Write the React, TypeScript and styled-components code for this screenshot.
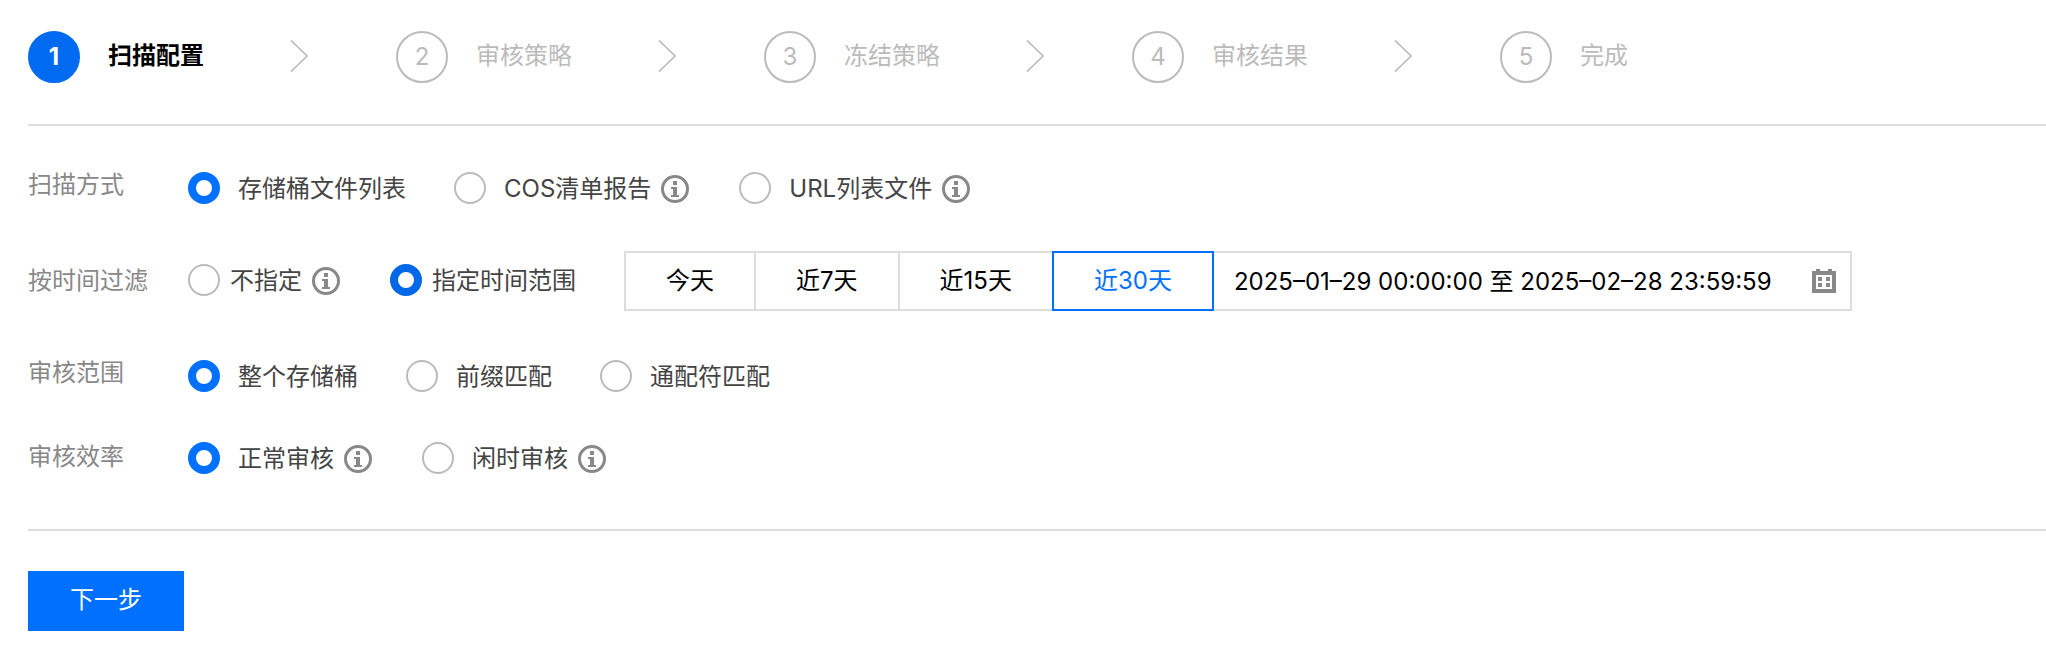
import React, { useState } from "react";
import styled, { createGlobalStyle } from "styled-components";

const GlobalStyle = createGlobalStyle`
  * { box-sizing: border-box; }
  body {
    margin: 0;
    background: #fff;
    color: #444;
    font-family: Inter, "Noto Sans CJK SC", sans-serif;
    font-size: 24px;
    line-height: 36px;
  }
  button, input { font: inherit; }
`;

const Page = styled.main`
  padding: 31px 0 17px 28px;
`;

const Steps = styled.ol`
  display: flex;
  margin: 0;
  padding: 0 0 41px;
  list-style: none;
  border-bottom: 2px solid #ddd;
`;

const StepItem = styled.li<{ $active: boolean }>`
  display: flex;
  align-items: center;
  width: 368px;
  color: ${(p) => (p.$active ? "#000" : "#bbb")};
  font-weight: ${(p) => (p.$active ? 700 : 400)};
`;

const StepNumber = styled.span<{ $active: boolean }>`
  display: flex;
  align-items: center;
  justify-content: center;
  width: 52px;
  height: 52px;
  margin-right: 28px;
  border: 2px solid ${(p) => (p.$active ? "#006bf0" : "#bbb")};
  border-radius: 50%;
  background: ${(p) => (p.$active ? "#006bf0" : "#fff")};
  color: ${(p) => (p.$active ? "#fff" : "#bbb")};
`;

const StepText = styled.span`
  padding-bottom: 2px;
`;

const StepArrow = styled.svg`
  width: 18px;
  height: 32px;
  margin: 0 88px 2px auto;
`;

const Form = styled.form`
  margin: 0;
`;

const Fields = styled.div`
  display: flex;
  flex-direction: column;
  gap: 44px;
  padding: 41px 0 52px;
  border-bottom: 2px solid #ddd;
`;

const Row = styled.div<{ $centered: boolean }>`
  display: flex;
  align-items: ${(p) => (p.$centered ? "center" : "flex-start")};
`;

const RowLabel = styled.span`
  flex: none;
  width: 160px;
  color: #888;
`;

const Options = styled.div<{ $inset: number }>`
  display: flex;
  align-items: center;
  padding-top: ${(p) => p.$inset}px;
`;

const Option = styled.div`
  display: flex;
  align-items: center;
  margin-right: 48px;
`;

const OptionLabel = styled.label<{ $gap: number }>`
  display: flex;
  align-items: center;
  gap: ${(p) => p.$gap}px;
  white-space: nowrap;
`;

const Radio = styled.input<{ $accent: string }>`
  appearance: none;
  flex: none;
  width: 32px;
  height: 32px;
  margin: 0 0 2px;
  border: 2px solid #bbb;
  border-radius: 50%;
  background: #fff;
  &:checked { border: 8px solid ${(p) => p.$accent}; }
`;

const InfoIcon = styled.svg`
  flex: none;
  width: 28px;
  height: 28px;
  margin: 0 2px 0 10px;
`;

const RangeGroup = styled.div`
  display: flex;
`;

const RangeButton = styled.button<{ $active: boolean }>`
  position: relative;
  z-index: ${(p) => (p.$active ? 1 : 0)};
  height: 60px;
  margin: 0 -2px 0 0;
  padding: 0 40px;
  border: 2px solid ${(p) => (p.$active ? "#0071ff" : "#ddd")};
  background: #fff;
  color: ${(p) => (p.$active ? "#0071ff" : "#000")};
  white-space: nowrap;
`;

const DateBox = styled.div`
  display: flex;
  align-items: center;
  width: 640px;
  height: 60px;
  padding: 0 14px 0 20px;
  border: 2px solid #ddd;
`;

const DateInput = styled.input`
  flex: 1;
  min-width: 0;
  padding: 2px 0 0;
  border: 0;
  outline: 0;
  background: transparent;
  color: #000;
`;

const CalendarIcon = styled.svg`
  flex: none;
  width: 24px;
  height: 24px;
`;

const NextButton = styled.button`
  display: block;
  height: 60px;
  margin-top: 40px;
  padding: 0 42px 2px;
  border: 0;
  background: #0071ff;
  color: #fff;
`;

const STEPS = ["扫描配置", "审核策略", "冻结策略", "审核结果", "完成"];
const RANGES = ["今天", "近7天", "近15天", "近30天"];

type Choice = { text: string; info?: boolean };
type FieldProps = {
  name: string;
  label: string;
  choices: Choice[];
  initial?: number;
  inset?: number;
  textGap?: number;
  accent?: string;
  children?: React.ReactNode;
};

const Info = () => (
  <InfoIcon viewBox="0 0 28 28" role="img" aria-label="说明">
    <circle cx="14" cy="14" r="12.5" fill="none" stroke="#888" strokeWidth="3" />
    <path d="M12 6h4v4h-4zM10 12h6v8h2v2h-8v-2h2v-6h-2z" fill="#888" />
  </InfoIcon>
);

function RadioField({
  name,
  label,
  choices,
  initial = 0,
  inset = 4,
  textGap = 18,
  accent = "#0071ff",
  children,
}: FieldProps) {
  const [selected, setSelected] = useState(initial);
  return (
    <Row $centered={inset === 0} role="radiogroup" aria-label={label}>
      <RowLabel>{label}</RowLabel>
      <Options $inset={inset}>
        {choices.map((choice, i) => (
          <Option key={choice.text}>
            <OptionLabel $gap={textGap}>
              <Radio
                type="radio"
                name={name}
                $accent={accent}
                checked={selected === i}
                onChange={() => setSelected(i)}
              />
              {choice.text}
            </OptionLabel>
            {choice.info && <Info />}
          </Option>
        ))}
        {children}
      </Options>
    </Row>
  );
}

export default function App() {
  const [range, setRange] = useState(3);
  return (
    <>
      <GlobalStyle />
      <Page>
        <Steps>
          {STEPS.map((step, i) => (
            <StepItem key={step} $active={i === 0} aria-current={i === 0 ? "step" : undefined}>
              <StepNumber $active={i === 0}>{i + 1}</StepNumber>
              <StepText>{step}</StepText>
              {i < STEPS.length - 1 && (
                <StepArrow viewBox="0 0 18 32" aria-hidden="true">
                  <path d="M1 0.5L17 16L1 31.5" fill="none" stroke="#bbb" strokeWidth="1.6" />
                </StepArrow>
              )}
            </StepItem>
          ))}
        </Steps>
        <Form onSubmit={(e) => e.preventDefault()}>
          <Fields>
            <RadioField
              name="method"
              label="扫描方式"
              choices={[{ text: "存储桶文件列表" }, { text: "COS清单报告", info: true }, { text: "URL列表文件", info: true }]}
            />
            <RadioField
              name="time"
              label="按时间过滤"
              initial={1}
              inset={0}
              textGap={10}
              accent="#0067e6"
              choices={[{ text: "不指定", info: true }, { text: "指定时间范围" }]}
            >
              <RangeGroup>
                {RANGES.map((text, i) => (
                  <RangeButton key={text} type="button" $active={range === i} onClick={() => setRange(i)}>
                    {text}
                  </RangeButton>
                ))}
                <DateBox>
                  <DateInput aria-label="时间范围" readOnly value="2025–01–29 00:00:00 至 2025–02–28 23:59:59" />
                  <CalendarIcon viewBox="0 0 24 24" aria-hidden="true">
                    <path
                      fillRule="evenodd"
                      fill="#888"
                      d="M0 2h4V0h4v2h8V0h4v2h4v22H0zM4 6v14h16V6zM6 8h4v4H6zM14 8h4v4h-4zM6 14h4v4H6zM14 14h4v4h-4z"
                    />
                  </CalendarIcon>
                </DateBox>
              </RangeGroup>
            </RadioField>
            <RadioField
              name="scope"
              label="审核范围"
              choices={[{ text: "整个存储桶" }, { text: "前缀匹配" }, { text: "通配符匹配" }]}
            />
            <RadioField
              name="speed"
              label="审核效率"
              inset={2}
              choices={[{ text: "正常审核", info: true }, { text: "闲时审核", info: true }]}
            />
          </Fields>
          <NextButton type="submit">下一步</NextButton>
        </Form>
      </Page>
    </>
  );
}
